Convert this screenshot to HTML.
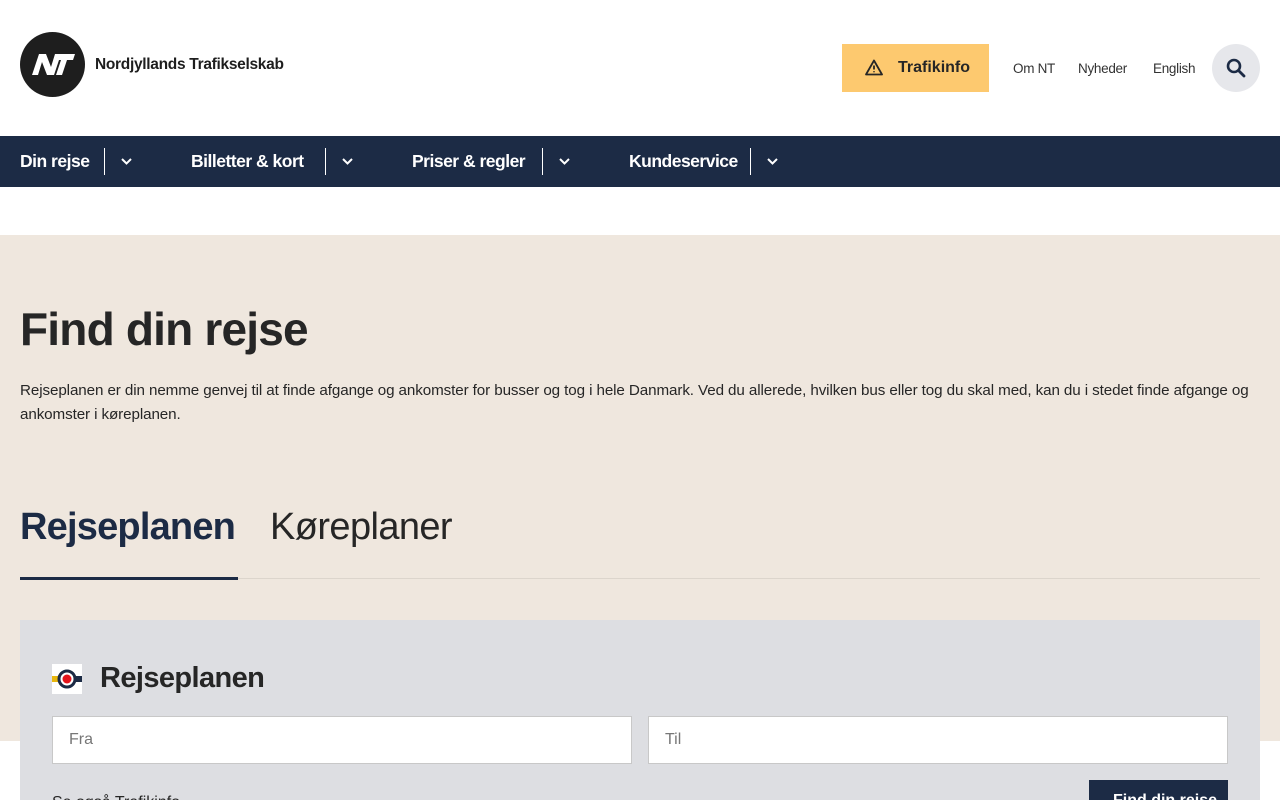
<!DOCTYPE html>
<html style="width:1280px;height:800px;overflow:hidden"><head><meta charset="utf-8"><style>
*{box-sizing:border-box;margin:0;padding:0}
body{width:1280px;height:800px;overflow:hidden;background:#fff;font-family:"Liberation Sans",sans-serif;color:#262626;position:relative}
.a{position:absolute}
.nav{top:136px;left:0;width:1280px;height:51px;background:#1c2b45;color:#fff}
.ni{position:absolute;top:0;height:51px;line-height:51px;font-weight:bold;font-size:17.5px;letter-spacing:-0.5px}
.sep{position:absolute;top:12px;width:1px;height:27px;background:#fff}
.chev{position:absolute;top:19px}
</style></head><body>
<svg class="a" style="left:20px;top:32px" width="65" height="65" viewBox="0 0 65 65"><circle cx="32.5" cy="32.5" r="32.5" fill="#1e1e1e"/><path d="M12 43 L19 22 H26 L31 35 L35 22 H41 L34 43 H27 L22 30 L18 43Z M38 22 H55 L53 28 H47 L42 43 H36 L41 28 H36Z" fill="#fff"/></svg>
<div class="a" style="left:95px;top:56px;font-size:15.5px;font-weight:bold;color:#1e1e1e;letter-spacing:-0.3px">Nordjyllands Trafikselskab</div>
<div class="a" style="left:842px;top:44px;width:147px;height:48px;background:#fdc96f;font-weight:bold;font-size:16px;line-height:48px;padding-left:56px;color:#262626">Trafikinfo</div>
<svg class="a" style="left:865px;top:59px" width="18" height="17" viewBox="0 0 18 17"><path d="M9 1.5 L17 15.5 H1 Z" fill="none" stroke="#262626" stroke-width="1.8" stroke-linejoin="round"/><path d="M9 6.5 V10.5 M9 12.3 V13.3" stroke="#262626" stroke-width="1.8"/></svg>
<div class="a" style="left:1013px;top:61px;font-size:13.5px;color:#333;letter-spacing:-0.3px">Om NT</div>
<div class="a" style="left:1078px;top:61px;font-size:13.5px;color:#333;letter-spacing:-0.3px">Nyheder</div>
<div class="a" style="left:1153px;top:61px;font-size:13.5px;color:#333;letter-spacing:-0.3px">English</div>
<div class="a" style="left:1212px;top:44px;width:48px;height:48px;border-radius:50%;background:#e6e7eb"></div>
<svg class="a" style="left:1226px;top:58px" width="20" height="20" viewBox="0 0 20 20"><circle cx="8" cy="8" r="6" fill="none" stroke="#1c2b45" stroke-width="2.6"/><path d="M12.5 12.5 L18 18" stroke="#1c2b45" stroke-width="2.8" stroke-linecap="round"/></svg>
<div class="a nav">
<div class="ni" style="left:20px">Din rejse</div><div class="sep" style="left:104px"></div>
<svg class="chev" style="left:120px" width="13" height="13" viewBox="0 0 13 13"><path d="M2 4 L6.5 8.5 L11 4" fill="none" stroke="#fff" stroke-width="2"/></svg>
<div class="ni" style="left:191px">Billetter &amp; kort</div><div class="sep" style="left:325px"></div>
<svg class="chev" style="left:341px" width="13" height="13" viewBox="0 0 13 13"><path d="M2 4 L6.5 8.5 L11 4" fill="none" stroke="#fff" stroke-width="2"/></svg>
<div class="ni" style="left:412px">Priser &amp; regler</div><div class="sep" style="left:542px"></div>
<svg class="chev" style="left:558px" width="13" height="13" viewBox="0 0 13 13"><path d="M2 4 L6.5 8.5 L11 4" fill="none" stroke="#fff" stroke-width="2"/></svg>
<div class="ni" style="left:629px">Kundeservice</div><div class="sep" style="left:750px"></div>
<svg class="chev" style="left:766px" width="13" height="13" viewBox="0 0 13 13"><path d="M2 4 L6.5 8.5 L11 4" fill="none" stroke="#fff" stroke-width="2"/></svg>
</div>
<div class="a" style="left:0;top:235px;width:1280px;height:506px;background:#efe7de"></div>
<div class="a" style="left:20px;top:302px;font-size:46px;font-weight:bold;color:#262626;letter-spacing:-0.8px">Find din rejse</div>
<div class="a" style="left:20px;top:379px;width:1240px;font-size:15.2px;line-height:24px;color:#262626;letter-spacing:-0.1px">Rejseplanen er din nemme genvej til at finde afgange og ankomster for busser og tog i hele Danmark. Ved du allerede, hvilken bus eller tog du skal med, kan du i stedet finde afgange og ankomster i køreplanen.</div>
<div class="a" style="left:20px;top:506px;font-size:38px;font-weight:bold;color:#1c2b45;letter-spacing:-0.8px">Rejseplanen</div>
<div class="a" style="left:270px;top:506px;font-size:38px;color:#262626;letter-spacing:-0.6px">Køreplaner</div>
<div class="a" style="left:20px;top:578px;width:1240px;height:1px;background:#dcd5cc"></div>
<div class="a" style="left:20px;top:577px;width:218px;height:3px;background:#1c2b45"></div>
<div class="a" style="left:20px;top:620px;width:1240px;height:180px;background:#dddee2"></div>
<svg class="a" style="left:52px;top:664px" width="30" height="30" viewBox="0 0 30 30"><rect width="30" height="30" fill="#fff"/><rect x="0" y="12" width="6" height="6" fill="#e8b70f"/><rect x="24" y="12" width="6" height="6" fill="#1c2b45"/><circle cx="15" cy="15" r="8" fill="#fff" stroke="#1c2b45" stroke-width="3"/><circle cx="15" cy="15" r="4.5" fill="#e3141b"/></svg>
<div class="a" style="left:100px;top:662px;font-size:29px;font-weight:bold;color:#262626;letter-spacing:-0.6px">Rejseplanen</div>
<div class="a" style="left:52px;top:716px;width:580px;height:48px;background:#fff;border:1px solid #c8c8c8;font-size:16px;color:#777;line-height:46px;padding-left:16px">Fra</div>
<div class="a" style="left:648px;top:716px;width:580px;height:48px;background:#fff;border:1px solid #c8c8c8;font-size:16px;color:#777;line-height:46px;padding-left:16px">Til</div>
<div class="a" style="left:52px;top:794px;font-size:16px;color:#262626">Se også Trafikinfo</div>
<div class="a" style="left:1089px;top:780px;width:139px;height:20px;background:#1c2b45;color:#fff;font-weight:bold;font-size:16px;padding:12px 0 0 24px;overflow:visible">Find din rejse</div>
</body></html>
